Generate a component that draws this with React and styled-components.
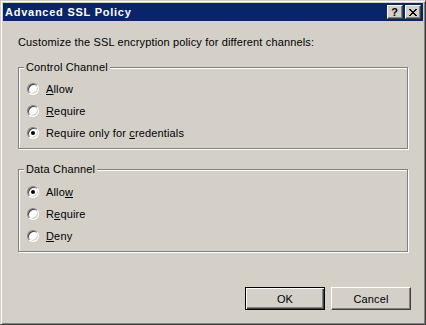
import React from "react"
import styled, { createGlobalStyle } from "styled-components"

const GlobalStyle = createGlobalStyle`
  html, body {
    margin: 0;
    padding: 0;
    background: #d4d0c8;
  }
  body {
    font-family: "Liberation Sans", Arial, sans-serif;
    font-size: 11px;
    letter-spacing: 0.15px;
    color: #000;
  }
`

const Window = styled.div`
  box-sizing: border-box;
  width: 426px;
  height: 325px;
  display: flex;
  flex-direction: column;
  background: #d4d0c8;
  border: 1px solid;
  border-color: #d4d0c8 #404040 #404040 #d4d0c8;
  box-shadow: inset 1px 1px 0 #fff, inset -1px -1px 0 #808080;
  padding: 2px;
`

const TitleBar = styled.div`
  height: 18px;
  display: flex;
  align-items: center;
  gap: 2px;
  padding: 0 2px;
  background: #0a246a;
`

const Title = styled.div`
  flex: 1;
  color: #fff;
  font-weight: bold;
  font-size: 11px;
  letter-spacing: 0.75px;
  line-height: 13px;
`

const CaptionButton = styled.div`
  box-sizing: border-box;
  width: 16px;
  height: 14px;
  display: flex;
  align-items: center;
  justify-content: center;
  background: #d4d0c8;
  border: 1px solid;
  border-color: #fff #404040 #404040 #fff;
  box-shadow: inset -1px -1px 0 #808080;
  font-weight: bold;
  font-size: 11px;
  letter-spacing: 0;
  line-height: 11px;
  padding-right: 1px;
`

const Body = styled.div`
  flex: 1;
  display: flex;
  flex-direction: column;
  padding: 15px 15px 12px 15px;
`

const Intro = styled.p`
  margin: 0;
  line-height: 13px;
`

const Group = styled.fieldset`
  margin: ${(p) => p.$gap}px 0 0 0;
  padding: 0;
  border: 1px solid #808080;
  box-shadow: 1px 1px 0 #fff, inset 1px 1px 0 #fff;
  min-inline-size: 0;
`

const Legend = styled.legend`
  margin-left: 5px;
  padding: 0 2px;
  line-height: 13px;
  background: #d4d0c8;
`

const Options = styled.div`
  display: flex;
  flex-direction: column;
  padding: ${(p) => p.$top}px 8px 4px 8px;
`

const Row = styled.label`
  height: 22px;
  display: flex;
  align-items: center;
  gap: 7px;
  line-height: 13px;

  u {
    text-underline-offset: 1px;
  }
`

const Radio = styled.span`
  position: relative;
  box-sizing: border-box;
  width: 12px;
  height: 12px;
  flex: none;
  border-radius: 50%;
  background: #fff;
  border: 1px solid;
  border-color: #808080 #fff #fff #808080;
  box-shadow: inset 1px 1px 0 #404040, inset -1px -1px 0 #d4d0c8;

  &::after {
    content: "";
    display: ${(p) => (p.$checked ? "block" : "none")};
    position: absolute;
    left: 3px;
    top: 3px;
    width: 4px;
    height: 4px;
    border-radius: 50%;
    background: #000;
  }
`

const ButtonRow = styled.div`
  margin-top: auto;
  margin-right: -3px;
  display: flex;
  justify-content: flex-end;
  gap: 6px;
`

const Button = styled.button`
  box-sizing: border-box;
  width: 80px;
  height: 23px;
  padding: 0;
  font: inherit;
  letter-spacing: inherit;
  color: #000;
  background: #d4d0c8;
  border: 1px solid;
  border-color: ${(p) => (p.$default ? "#000" : "#fff #404040 #404040 #fff")};
  box-shadow: ${(p) =>
    p.$default
      ? "inset 1px 1px 0 #fff, inset -1px -1px 0 #404040, inset -2px -2px 0 #808080"
      : "inset -1px -1px 0 #808080"};
`

const Option = ({ checked, children }) => (
  <Row>
    <Radio $checked={checked} />
    <span>{children}</span>
  </Row>
)

const App = () => {
  return (
    <>
      <GlobalStyle />
      <Window>
        <TitleBar>
          <Title>Advanced SSL Policy</Title>
          <CaptionButton>?</CaptionButton>
          <CaptionButton>
            <svg width="8" height="7" viewBox="0 0 8 7" shapeRendering="crispEdges">
              <path
                d="M0 0h2v1h-2zM6 0h2v1h-2zM1 1h2v1h-2zM5 1h2v1h-2zM2 2h4v1h-4zM3 3h2v1h-2zM2 4h4v1h-4zM1 5h2v1h-2zM5 5h2v1h-2zM0 6h2v1h-2zM6 6h2v1h-2z"
                fill="#000"
              />
            </svg>
          </CaptionButton>
        </TitleBar>
        <Body>
          <Intro>Customize the SSL encryption policy for different channels:</Intro>
          <Group $gap={12}>
            <Legend>Control Channel</Legend>
            <Options $top={4}>
              <Option>
                <u>A</u>llow
              </Option>
              <Option>
                <u>R</u>equire
              </Option>
              <Option checked>
                Require only for <u>c</u>redentials
              </Option>
            </Options>
          </Group>
          <Group $gap={14}>
            <Legend>Data Channel</Legend>
            <Options $top={5}>
              <Option checked>
                Allo<u>w</u>
              </Option>
              <Option>
                R<u>e</u>quire
              </Option>
              <Option>
                <u>D</u>eny
              </Option>
            </Options>
          </Group>
          <ButtonRow>
            <Button $default>OK</Button>
            <Button>Cancel</Button>
          </ButtonRow>
        </Body>
      </Window>
    </>
  )
}

export default App
